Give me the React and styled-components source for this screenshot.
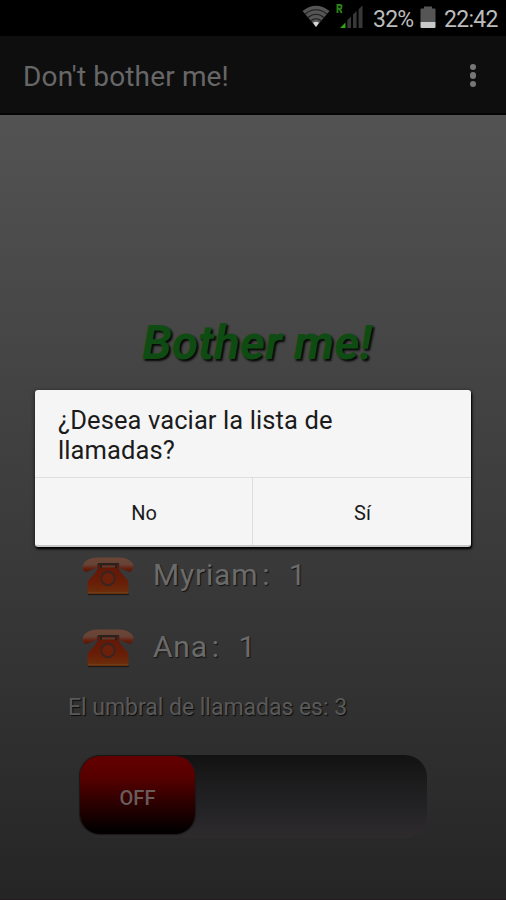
import React from 'react';
import styled, { createGlobalStyle } from 'styled-components';

const GlobalStyle = createGlobalStyle`
  * {
    box-sizing: border-box;
  }

  body {
    margin: 0;
    background: #000;
    font-family: Roboto, "Liberation Sans", sans-serif;
  }
`;

const Screen = styled.div`
  position: relative;
  display: flex;
  flex-direction: column;
  width: 506px;
  height: 900px;
  overflow: hidden;
`;

const StatusBar = styled.header`
  display: flex;
  justify-content: flex-end;
  height: 36px;
  padding: 0 8px 0 0;
  background: #000;
`;

const StatusIcon = styled.svg`
  display: block;
  flex: none;
  height: 36px;
  margin-right: ${({ $gap }) => $gap}px;
`;

const StatusText = styled.span`
  width: ${({ $width }) => $width}px;
  color: #bcbcbc;
  font-size: 23px;
  line-height: 39px;
  letter-spacing: ${({ $spacing }) => $spacing}px;
  white-space: nowrap;
`;

const ActionBar = styled.div`
  display: flex;
  align-items: center;
  justify-content: space-between;
  height: 79px;
  padding: 0 30px 0 23px;
  background: #0e0e0e;
  border-bottom: 2px solid #050505;
`;

const AppTitle = styled.h1`
  margin: 4px 0 0;
  color: #676767;
  font-size: 28px;
  font-weight: 400;
  line-height: 34px;
  letter-spacing: 0.15px;
  white-space: nowrap;
`;

const Overflow = styled.div`
  display: grid;
  gap: 2px;
  margin-top: 2px;
`;

const Dot = styled.i`
  width: 6.5px;
  height: 6.5px;
  border-radius: 50%;
  background: #777;
`;

const Content = styled.main`
  flex: 1;
  display: flex;
  flex-direction: column;
  background: linear-gradient(#535353, #424242 37%, #353535 67%, #252525);
  border-bottom: 1px solid #21191d;
`;

const Heading = styled.h2`
  height: 56px;
  margin: 200px 0 0 142px;
  color: #0f4c13;
  font-size: 48px;
  font-style: italic;
  font-weight: 700;
  line-height: 56px;
  letter-spacing: 0;
  text-shadow: 2px 2px 2px #080808;
  white-space: nowrap;
`;

const CallList = styled.ul`
  margin: 167px 0 0;
  padding: 0 0 0 82px;
  list-style: none;
`;

const CallRow = styled.li`
  display: flex;
  align-items: center;
  height: 72px;
  color: #6b6b6b;
  font-size: 30px;
  letter-spacing: 0.8px;
  text-shadow: 1px 1px 1px #111;
`;

const PhoneSvg = styled.svg`
  display: block;
  width: 52px;
  height: 40px;
  margin: 4px 19px 0 0;
`;

const CallCount = styled.span`
  margin-left: 4px;
  word-spacing: 1px;
  white-space: pre;
`;

const Threshold = styled.p`
  height: 30px;
  margin: 11px 0 0 68px;
  color: #595959;
  font-size: 23px;
  line-height: 30px;
  letter-spacing: -0.03px;
  text-shadow: 1px 1px 1px #0c0c0c;
  white-space: nowrap;
`;

const Track = styled.div`
  width: 348px;
  height: 83px;
  margin: 32px 0 0 79px;
  padding: 1px;
  border-radius: 22px;
  background: linear-gradient(#121212, #1b1b1c 30%, #242326 68%, #2e2b2d);
`;

const Thumb = styled.div`
  display: flex;
  align-items: center;
  justify-content: center;
  width: 115px;
  height: 78px;
  border-radius: 20px;
  background: linear-gradient(#620000 5%, #560000 28%, #260000 65%, #050000 93%);
  box-shadow: 0 0 1px 1px #191919;
  color: #685c5c;
  font-size: 20px;
  font-weight: 500;
  padding-top: 5px;
`;

const Dialog = styled.section`
  position: absolute;
  top: 390px;
  left: 35px;
  width: 436px;
  height: 157px;
  border-radius: 3px;
  border-bottom: 2px solid #c7c7c7;
  background: #f5f5f5;
  box-shadow: 1px 2px 2px #000, 0 1px 4px rgba(0, 0, 0, 0.6);
`;

const Message = styled.p`
  height: 88px;
  margin: 0;
  padding: 15px 23px 0;
  border-bottom: 1px solid #dedede;
  color: #1b1b1b;
  font-size: 25.5px;
  line-height: 30px;
  letter-spacing: 0.1px;
  white-space: pre-line;
`;

const Actions = styled.div`
  display: grid;
  grid-template-columns: 1fr 1fr;
  height: 67px;
`;

const DialogButton = styled.button`
  padding: 2px 0 0 1px;
  border: 0;
  border-right: ${({ $divided }) => ($divided ? '1px solid #dedede' : '0')};
  background: none;
  color: #1b1b1b;
  font: 400 20px/24px Roboto, "Liberation Sans", sans-serif;
`;

const Wifi = () => (
  <StatusIcon $gap={6} width="28" viewBox="0 0 28 36">
    <path d="M0.5 11 Q14 0.5 27.5 11 L14 27 Z" fill="#555" />
    <g fill="none" stroke="#1c1c1c" strokeWidth="1.1">
      <path d="M3 14 Q14 5.5 25 14" />
      <path d="M6 17.5 Q14 11 22 17.5" />
      <path d="M8.5 21 Q14 16.5 19.5 21" />
    </g>
    <path d="M11 22.8 Q14 20.6 17 22.8 L14 27 Z" fill="#d8d8d8" />
  </StatusIcon>
);

const Signal = () => (
  <StatusIcon $gap={9} width="28" viewBox="0 0 28 36">
    <path d="M1.5 13 V5 H4.2 Q5.5 5 5.5 6.8 T4.2 8.7 H1.5 M3.6 8.7 L5.7 13" fill="none" stroke="#2b8517" strokeWidth="1.9" />
    <path d="M4 28 L9.5 22.5 V28 Z" fill="#32a40e" />
    <path d="M11.3 28 V20.3 L15 16.6 V28 Z M17 28 V14.6 L20.6 11 V28 Z M22.6 28 V9.2 L26.5 5.5 V28 Z" fill="#383838" />
  </StatusIcon>
);

const Battery = () => (
  <StatusIcon $gap={8} width="16" viewBox="0 0 16 36">
    <path d="M1.5 8.5 H4 V6.5 H12 V8.5 H14.5 Q15.5 8.5 15.5 9.5 V22 H0.5 V9.5 Q0.5 8.5 1.5 8.5 Z" fill="#555" />
    <path d="M0.5 22 H15.5 V27 Q15.5 28 14.5 28 H1.5 Q0.5 28 0.5 27 Z" fill="#c8c8c8" />
  </StatusIcon>
);

const Phone = () => (
  <PhoneSvg viewBox="0 0 52 40">
    <defs>
      <linearGradient id="phoneBody" x1="0" y1="0" x2="0" y2="1">
        <stop offset="0" stopColor="#5f1708" />
        <stop offset="0.6" stopColor="#681d07" />
        <stop offset="1" stopColor="#6b300c" />
      </linearGradient>
      <linearGradient id="phoneHandset" x1="0" y1="0" x2="0" y2="1">
        <stop offset="0" stopColor="#6b4635" />
        <stop offset="0.5" stopColor="#664337" />
        <stop offset="0.75" stopColor="#66200f" />
        <stop offset="1" stopColor="#541507" />
      </linearGradient>
    </defs>
    <path
      d="M15.5 7 V13 Q14 16 10.5 20 Q5.5 24 5.5 28 V36.5 Q5.5 38 7 38 H45 Q46.5 38 46.5 36.5 V28 Q46.5 24 42 20 Q38 16 37 13 V7 Z"
      fill="url(#phoneBody)"
    />
    <path
      d="M1 9 Q4 1.5 16 1.5 H37 Q48 1.5 51.5 9 Q52 12 49.5 15 Q48.5 16.5 46 15.5 L39 12.5 Q37.5 11 37.5 8 H15 Q15 11 13 12.5 L6 15.5 Q3.5 16.5 2 15 Q0 12 1 9 Z"
      fill="url(#phoneHandset)"
    />
    <path d="M16 7 H37 V8.5 H35 V12 H33 V9 H20 V12 H18 V8.5 H16 Z" fill="#28221f" />
    <path d="M20 9.5 H33 V11.5 H20 Z" fill="#5c392d" />
    <circle cx="26" cy="22.5" r="6.7" fill="#6d2009" stroke="#38251f" strokeWidth="2" />
    <path d="M6 36.5 H46" stroke="#6b3c1a" strokeWidth="1" />
    <path d="M6 38.6 H47" stroke="#191513" strokeWidth="1" />
  </PhoneSvg>
);

const calls = [
  { name: 'Myriam', count: 1 },
  { name: 'Ana', count: 1 },
];

const App = () => (
  <>
    <GlobalStyle />
    <Screen>
      <StatusBar>
        <Wifi />
        <Signal />
        <StatusText $width={47} $spacing={-0.8}>32%</StatusText>
        <Battery />
        <StatusText $width={54} $spacing={-0.7}>22:42</StatusText>
      </StatusBar>
      <ActionBar>
        <AppTitle>Don&apos;t bother me!</AppTitle>
        <Overflow>
          <Dot />
          <Dot />
          <Dot />
        </Overflow>
      </ActionBar>
      <Content>
        <Heading>Bother me!</Heading>
        <CallList>
          {calls.map(({ name, count }) => (
            <CallRow key={name}>
              <Phone />
              <span>{name}</span>
              <CallCount>{`:  ${count}`}</CallCount>
            </CallRow>
          ))}
        </CallList>
        <Threshold>El umbral de llamadas es: 3</Threshold>
        <Track>
          <Thumb>OFF</Thumb>
        </Track>
      </Content>
      <Dialog>
        <Message>{'¿Desea vaciar la lista de\nllamadas?'}</Message>
        <Actions>
          <DialogButton $divided>No</DialogButton>
          <DialogButton>Sí</DialogButton>
        </Actions>
      </Dialog>
    </Screen>
  </>
);

export default App;
